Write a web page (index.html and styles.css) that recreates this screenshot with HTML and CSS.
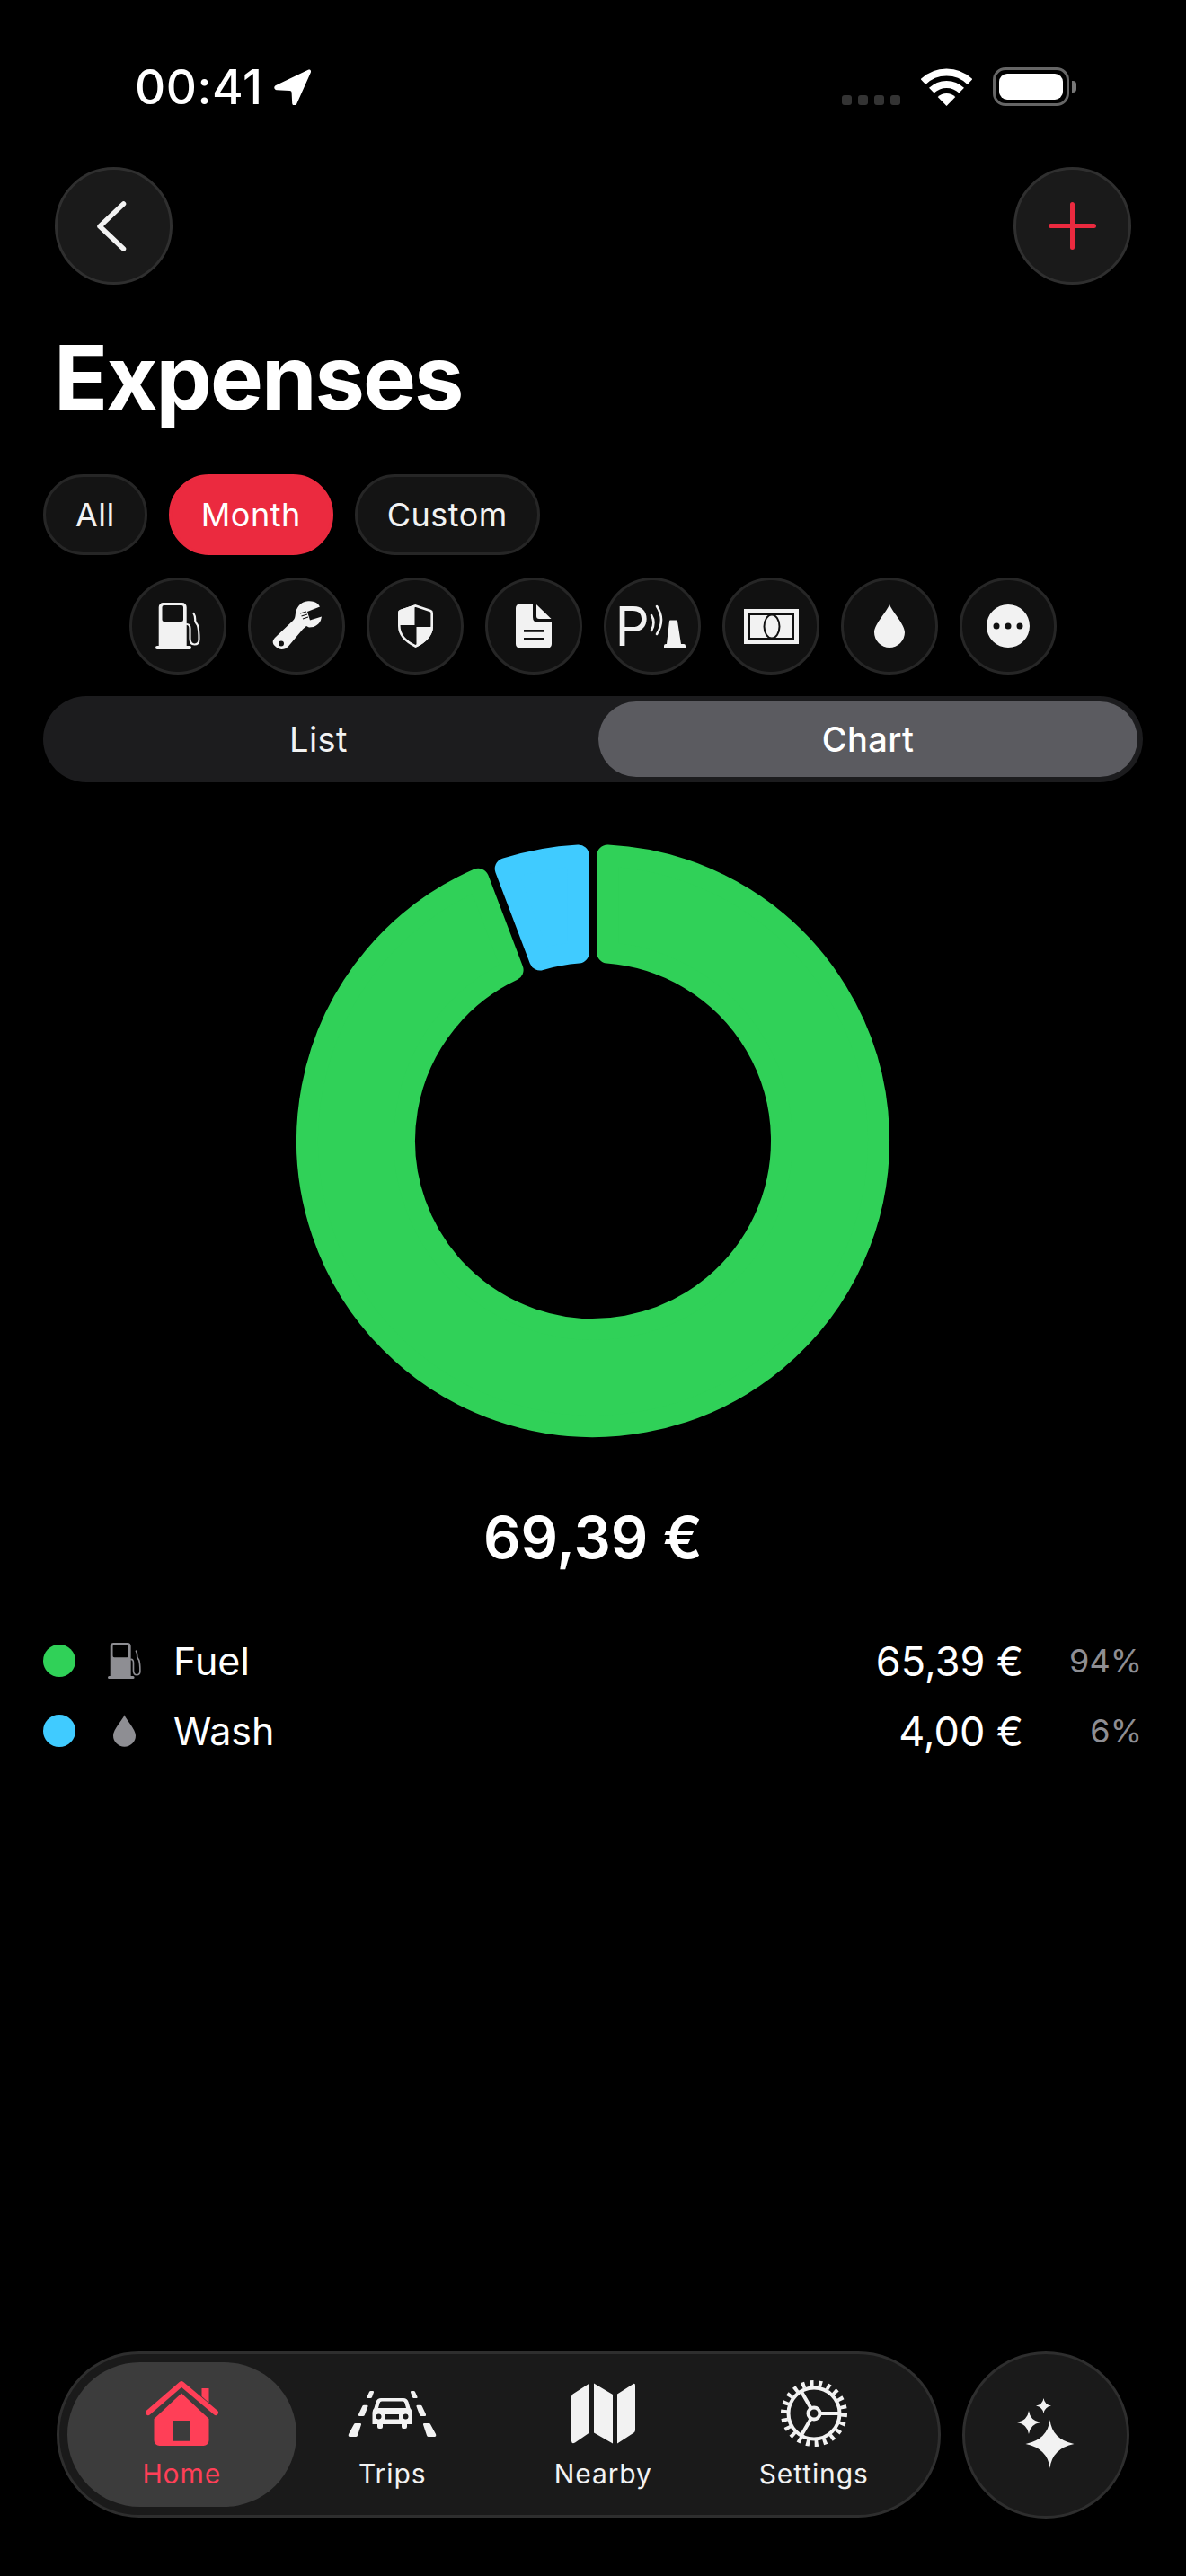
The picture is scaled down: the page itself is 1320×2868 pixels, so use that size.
FILE: index.html
```html
<!DOCTYPE html>
<html lang="en">
<head>
    <meta charset="UTF-8">
    <meta name="viewport" content="width=device-width, initial-scale=1.0">
    <title>Expenses</title>
    <link rel="stylesheet" href="styles.css">
</head>
<body>
    <svg class="defs">
        <symbol id="fuel" viewBox="0 0 50 52">
            <path fill="currentColor" fill-rule="evenodd" d="M3.7 5a5 5 0 0 1 5-5h21a5 5 0 0 1 5 5v43h3.3a2 2 0 0 1 0 4H2a2 2 0 0 1 0-4h1.7zM9.5 3a2 2 0 0 0-2 2v14a2 2 0 0 0 2 2h19.500a2 2 0 0 0 2-2V5a2 2 0 0 0-2-2z"/>
            <path fill="none" stroke="currentColor" stroke-width="2.200" stroke-linecap="round" d="M35 24c3 0 3.500 2 3.500 5v11c0 4 1.500 6.500 5 6.500s5-2.500 5-6c0-7-.5-12-1.500-15-.7-2-2.500-3-2.800-5.500-.2-2 .8-4-1.700-8"/>
        </symbol>
        <symbol id="drop" viewBox="0 0 34 48">
            <path fill="currentColor" d="M17 0c3 8 17 22 17 31a17 17 0 0 1-34 0C0 22 14 8 17 0z"/>
        </symbol>
    </svg>

    <div class="phone">
        <div class="status-bar">
            <div class="status-time">
                <span>00:41</span>
                <svg width="41" height="40" viewBox="0 0 41 40"><path fill="#fff" d="M38 .7 2 18c-2.800 1.400-2 5 1 5.200l14.500.8c1.400.1 2 .8 2.100 2.200l.6 11.800c.2 3 3.700 3.500 5 .8L40.700 4C41.700 1.500 40.300-.3 38 .7z"/></svg>
            </div>
            <div class="status-icons">
                <div class="signal"><i></i><i></i><i></i><i></i></div>
                <svg class="wifi" width="57" height="42" viewBox="0 0 57 42">
                    <path fill="none" stroke="#fff" stroke-width="8" d="M2.450 15A37.500 37.500 0 0 1 54.550 15M11.800 24.700A24 24 0 0 1 45.200 24.700"/>
                    <path fill="#fff" d="M28.500 42 18.700 32A14 14 0 0 1 38.300 32z"/>
                </svg>
                <div class="battery"><div class="battery-fill"></div></div>
                <div class="battery-nub"></div>
            </div>
        </div>

        <div class="top-nav">
            <button class="round-btn">
                <svg width="33" height="56" viewBox="0 0 33 56"><path fill="none" stroke="#f2f2f2" stroke-width="5.500" stroke-linecap="round" stroke-linejoin="round" d="M29.500 3 3 28l26.500 25"/></svg>
            </button>
            <button class="round-btn">
                <svg width="53" height="53" viewBox="0 0 53 53"><path fill="none" stroke="#eb2a3f" stroke-width="5" stroke-linecap="round" d="M26.500 2.500v48M2.500 26.500h48"/></svg>
            </button>
        </div>

        <h1 class="page-title">Expenses</h1>

        <div class="chips">
            <div class="chip">All</div>
            <div class="chip chip-active">Month</div>
            <div class="chip">Custom</div>
        </div>

        <div class="categories">
            <div class="cat"><svg width="50" height="52"><use href="#fuel"/></svg></div>
            <div class="cat">
                <svg width="55" height="56" viewBox="0 0 55 56">
                    <path fill="#f2f2f2" fill-rule="evenodd" d="M4 40 23 22c2-2 2.500-4 2.800-7C26.500 8 31 1 40 .3c4-.3 8 .7 11 3.200l2 3-14 5.500 3 9.500 13-4-1 4c-1 3-4 6-8 7.500l-5 .5-3-1.500-4 3.500-16 19c-4 4.500-10 4.500-13.500 1C-.5 48-.5 44 4 40zM10 44.500a3 3 0 1 0 0 6 3 3 0 0 0 0-6z"/>
                    <path fill="none" stroke="#111" stroke-width="1.300" d="M31 14l7-2M32.500 17l6.500-2M34 20l6-2"/>
                </svg>
            </div>
            <div class="cat">
                <svg width="39" height="48" viewBox="0 0 39 48">
                    <path fill="none" stroke="#f2f2f2" stroke-width="2.600" d="M19.500 1.400 36 7q1.700.6 1.700 2.400V24c0 10-8 17.500-18.200 22.500C9.300 41.500 1.300 34 1.300 24V9.400Q1.300 7.600 3 7z"/>
                    <path fill="#f2f2f2" d="M18.500.5V23H0V9q0-2 2-3zM20.500 25H39c-.5 11-9.500 18-18.500 22.500z"/>
                </svg>
            </div>
            <div class="cat">
                <svg width="40" height="50" viewBox="0 0 40 50">
                    <path fill="#f2f2f2" fill-rule="evenodd" d="M5 0h14v15q0 6 6 6h15v24a5 5 0 0 1-5 5H5a5 5 0 0 1-5-5V5a5 5 0 0 1 5-5zM9 29v2.800h22V29zM9 38v2.800h22V38z"/>
                    <path fill="#f2f2f2" d="M23 1l16.500 16H26q-3 0-3-3z"/>
                </svg>
            </div>
            <div class="cat">
                <span class="parking-letter">P</span>
                <svg width="40" height="48" viewBox="33 0 40 48">
                    <path fill="none" stroke="#f2f2f2" stroke-width="2.600" stroke-linecap="round" d="M35 12q5 8 0 17M41 2q10 15 0 31"/>
                    <path fill="#f2f2f2" d="M55 18.500q0-1 1-1h7q1 0 1 1l4 25.500h3q2 0 2 2v2H49v-2q0-2 2-2h1z"/>
                </svg>
            </div>
            <div class="cat">
                <svg width="61" height="39" viewBox="0 0 61 39">
                    <rect width="61" height="39" fill="#f2f2f2"/>
                    <rect x="6" y="6" width="49" height="27" fill="#f2f2f2" stroke="#111" stroke-width="2"/>
                    <ellipse cx="31" cy="19.500" rx="8.500" ry="13" fill="#f2f2f2" stroke="#111" stroke-width="2"/>
                </svg>
            </div>
            <div class="cat"><svg width="34" height="48"><use href="#drop"/></svg></div>
            <div class="cat">
                <svg width="48" height="48" viewBox="0 0 48 48">
                    <path fill="#f2f2f2" fill-rule="evenodd" d="M24 0a24 24 0 1 1 0 48 24 24 0 0 1 0-48zM11 20.500a3.500 3.500 0 1 0 0 7 3.500 3.500 0 0 0 0-7zM24 20.500a3.500 3.500 0 1 0 0 7 3.500 3.500 0 0 0 0-7zM37 20.500a3.500 3.500 0 1 0 0 7 3.500 3.500 0 0 0 0-7z"/>
                </svg>
            </div>
        </div>

        <div class="segment">
            <div class="segment-item segment-list">List</div>
            <div class="segment-item segment-active">Chart</div>
        </div>

        <svg class="donut" width="662" height="662" viewBox="-331 -331 662 662">
            <path fill="#30d158" stroke="#30d158" stroke-width="24" stroke-linejoin="round" d="M16.300 -317.580A318 318 0 1 1 -127.760 -291.190L-89.420 -190A210 210 0 1 0 16.300 -209.370Z"/>
            <path fill="#40cbff" stroke="#40cbff" stroke-width="24" stroke-linejoin="round" d="M-97.280 -302.750A318 318 0 0 1 -16.300 -317.580L-16.300 -209.370A210 210 0 0 0 -58.940 -201.560Z"/>
        </svg>

        <div class="total">69,39 €</div>

        <div class="legend">
            <div class="legend-row">
                <span class="dot dot-fuel"></span>
                <span class="legend-icon"><svg width="37" height="40" viewBox="0 0 50 52" preserveAspectRatio="none"><use href="#fuel" width="50" height="52"/></svg></span>
                <span class="legend-label">Fuel</span>
                <span class="legend-amount">65,39 €</span>
                <span class="legend-pct">94%</span>
            </div>
            <div class="legend-row">
                <span class="dot dot-wash"></span>
                <span class="legend-icon"><svg width="25" height="36"><use href="#drop"/></svg></span>
                <span class="legend-label">Wash</span>
                <span class="legend-amount">4,00 €</span>
                <span class="legend-pct">6%</span>
            </div>
        </div>

        <div class="bottom">
            <div class="tabbar">
                <div class="tab tab-active">
                    <svg width="81" height="72" viewBox="0 0 81 72">
                        <path fill="#ff3f57" fill-rule="evenodd" d="M40 13.500 70.500 42v24a6 6 0 0 1-6 6h-49a6 6 0 0 1-6-6V42zM30.500 44v22.700h19V44z"/>
                        <path fill="#ff3f57" d="M62.500 8h8v16l-8-7z"/>
                        <path fill="none" stroke="#ff3f57" stroke-width="6" stroke-linecap="round" stroke-linejoin="round" d="M3 35 40 3l38 32"/>
                    </svg>
                    <span>Home</span>
                </div>
                <div class="tab">
                    <svg width="99" height="52" viewBox="0 0 99 52">
                        <path fill="#f2f2f2" d="M1 49 7 38q.5-1 1.500-1H14q1.500 0 1 1.500L11 50.500q-.5 1.500-2 1.500H2.500Q0 52 1 49zM12 27l4.500-9.500q.5-.8 1.500-.8h3.500q1.500 0 1 1.500L19 27.500q-.5 1.500-2 1.500h-4q-1.500 0-1-2zM21.500 7.500 24 2q.5-1 1.500-1h2.500q1.500 0 1 1.500L27 8q-.5 1-1.500 1h-3q-1.500 0-1-1.500zM98 49 92 38q-.5-1-1.500-1H85q-1.500 0-1 1.500l4 12q.5 1.500 2 1.500h6.500q2.500 0 1.500-3zM87 27l-4.500-9.500q-.5-.8-1.500-.8h-3.500q-1.500 0-1 1.500L80 27.500q.5 1.500 2 1.500h4q1.500 0 1-2zM77.500 7.500 75 2q-.5-1-1.500-1H71q-1.500 0-1 1.500L72 8q.5 1 1.500 1h3q1.500 0 1-1.500z"/>
                        <path fill="#f2f2f2" fill-rule="evenodd" d="M37 9h25q4 0 5.500 4l2 7q2 2 2 5v13H66v3a2 2 0 0 1-2 2h-2a2 2 0 0 1-2-2v-3H39v3a2 2 0 0 1-2 2h-2a2 2 0 0 1-2-2v-3h-5.500V25q0-3 2-5l2-7Q33 9 37 9zm1 3.500q-2 0-2.500 2L34 20h31l-1.500-5.500q-.5-2-2.500-2zM34.500 26.500a3 3 0 1 0 0 6 3 3 0 0 0 0-6zM64.500 26.500a3 3 0 1 0 0 6 3 3 0 0 0 0-6zM42 27v5.500h15V27z"/>
                    </svg>
                    <span>Trips</span>
                </div>
                <div class="tab">
                    <svg width="71" height="67" viewBox="0 0 71 67">
                        <path fill="#f2f2f2" d="M0 15q0-2 1.500-3L20 0v55L4 66q-4 2-4-2zM25 0l21 12.500V67L25 55zM51 12 69 .5q2-1 2 2V52q0 2-1.500 3L51 67z"/>
                    </svg>
                    <span>Nearby</span>
                </div>
                <div class="tab">
                    <svg width="74" height="74" viewBox="0 0 74 74">
                        <circle cx="37" cy="37" r="33.500" fill="none" stroke="#f2f2f2" stroke-width="7" stroke-dasharray="4 5.570"/>
                        <circle cx="37" cy="37" r="28.500" fill="none" stroke="#f2f2f2" stroke-width="4"/>
                        <path fill="none" stroke="#f2f2f2" stroke-width="4" d="M44 37h22M33.500 31l-11-19M33.500 43l-11 19"/>
                        <circle cx="37" cy="37" r="6.500" fill="none" stroke="#f2f2f2" stroke-width="4"/>
                    </svg>
                    <span>Settings</span>
                </div>
            </div>
            <button class="spark-btn">
                <svg width="64" height="78" viewBox="0 0 64 78">
                    <path fill="#f2f2f2" d="M36.500 24Q39 46 63.500 51 39 56 36.500 78 34 56 9.500 51 34 46 36.500 24zM13 14Q14.500 25 26 27 14.500 29 13 40 11.500 29 0 27 11.500 25 13 14zM29.500 0Q30.500 7 38 8.500 30.500 10 29.500 17 28.500 10 21 8.500 28.500 7 29.500 0z"/>
                </svg>
            </button>
        </div>
    </div>
</body>
</html>
```

FILE: styles.css
```css
* {
    box-sizing: border-box;
}
body {
    font-family: Inter, "Noto Sans", sans-serif;
    margin: 0;
    padding: 0;
    background: #000;
    color: #fff;
}
.defs {
    display: none;
}
.phone {
    height: 2868px;
    display: flex;
    flex-direction: column;
    overflow: hidden;
}
svg {
    display: block;
}

.status-bar {
    display: flex;
    justify-content: space-between;
    align-items: center;
    height: 43px;
    margin-top: 75px;
    padding: 0 122px 0 150px;
}
.status-time {
    display: flex;
    align-items: center;
    gap: 13px;
    font-size: 53px;
    font-weight: 500;
    letter-spacing: .5px;
}
.status-icons {
    display: flex;
    align-items: center;
}
.signal {
    display: flex;
    gap: 7px;
    align-self: flex-end;
    margin-right: 23px;
    margin-bottom: 1px;
}
.signal i {
    width: 11px;
    height: 11px;
    border-radius: 3px;
    background: #333;
}
.wifi {
    margin-right: 23px;
}
.battery {
    width: 85px;
    height: 43px;
    padding: 4px;
    border: 3px solid #666;
    border-radius: 14px;
}
.battery-fill {
    height: 100%;
    border-radius: 9px;
    background: #fff;
}
.battery-nub {
    width: 5px;
    height: 13px;
    margin-left: 3px;
    border-radius: 0 4px 4px 0;
    background: #777;
}

.top-nav {
    display: flex;
    justify-content: space-between;
    margin-top: 68px;
    padding: 0 61px;
}
.round-btn {
    display: flex;
    align-items: center;
    justify-content: center;
    width: 131px;
    height: 131px;
    padding: 0;
    border: 3px solid #2f2f2f;
    border-radius: 50%;
    background: #1a1a1a;
}
.round-btn:first-child svg {
    margin-right: 4px;
}

.page-title {
    margin: 48px 0 0;
    padding-left: 60px;
    font-size: 99px;
    line-height: 110px;
    font-weight: 700;
    letter-spacing: -2px;
}

.chips {
    display: flex;
    gap: 24px;
    margin-top: 53px;
    padding-left: 48px;
}
.chip {
    display: flex;
    align-items: center;
    height: 90px;
    padding: 0 33px;
    border: 3px solid #262626;
    border-radius: 45px;
    background: #141414;
    font-size: 36px;
    letter-spacing: .5px;
    color: #f2f2f2;
}
.chip-active {
    border-color: #eb2a3f;
    background: #eb2a3f;
    color: #fff;
}

.categories {
    display: flex;
    justify-content: center;
    gap: 24px;
    margin-top: 25px;
}
.cat {
    display: flex;
    align-items: center;
    justify-content: center;
    width: 108px;
    height: 108px;
    border: 3px solid #262626;
    border-radius: 50%;
    background: #111;
    color: #f2f2f2;
}
.parking-letter {
    width: 33px;
    font-size: 60px;
    line-height: 60px;
    text-indent: -5px;
    color: #f2f2f2;
}

.segment {
    display: grid;
    grid-template-columns: 1fr 1fr;
    height: 96px;
    margin: 24px 48px 0;
    padding: 6px;
    border-radius: 48px;
    background: #1c1c1e;
}
.segment-item {
    display: flex;
    align-items: center;
    justify-content: center;
    border-radius: 42px;
    font-size: 38px;
    letter-spacing: .4px;
    color: #f2f2f2;
}
.segment-list {
    padding-right: 5px;
}
.segment-active {
    margin-left: 6px;
    background: #5b5b60;
    color: #fff;
    font-weight: 500;
}

.donut {
    margin: 68px auto 0;
}

.total {
    margin-top: 71px;
    text-align: center;
    font-size: 65px;
    font-weight: 600;
}

.legend {
    margin-top: 59px;
    padding: 0 49px 0 48px;
}
.legend-row {
    display: flex;
    align-items: center;
    height: 78px;
}
.dot {
    width: 36px;
    height: 36px;
    border-radius: 50%;
}
.dot-fuel {
    background: #30d158;
}
.dot-wash {
    background: #40cbff;
}
.legend-icon {
    display: flex;
    justify-content: center;
    width: 37px;
    margin: 0 36px 0 36px;
    color: #8e8e93;
}
.legend-label {
    flex: 1;
    font-size: 43px;
}
.legend-amount {
    font-size: 45px;
}
.legend-pct {
    width: 132px;
    text-align: right;
    font-size: 36px;
    color: #8e8e93;
}

.bottom {
    display: flex;
    gap: 24px;
    margin-top: auto;
    margin-bottom: 64px;
    padding-left: 63px;
}
.tabbar {
    display: grid;
    grid-template-columns: repeat(4, 234.500px);
    width: 984px;
    height: 185px;
    padding: 9px 19px;
    border: 3px solid #2e2e2e;
    border-radius: 92px;
    background: #1a1a1a;
}
.tab {
    display: flex;
    flex-direction: column;
    align-items: center;
    justify-content: center;
    gap: 12px;
    font-size: 30px;
    letter-spacing: .9px;
    color: #f2f2f2;
}
.tab svg {
    height: 74px;
}
.tab-active {
    margin: 0 -10.500px;
    border-radius: 81px;
    background: #3c3c3c;
    color: #ff3f57;
}
.spark-btn {
    display: flex;
    align-items: center;
    justify-content: center;
    width: 186px;
    height: 186px;
    padding: 0;
    border: 3px solid #2e2e2e;
    border-radius: 50%;
    background: #1a1a1a;
}
.spark-btn svg {
    margin-bottom: 4px;
}
```
